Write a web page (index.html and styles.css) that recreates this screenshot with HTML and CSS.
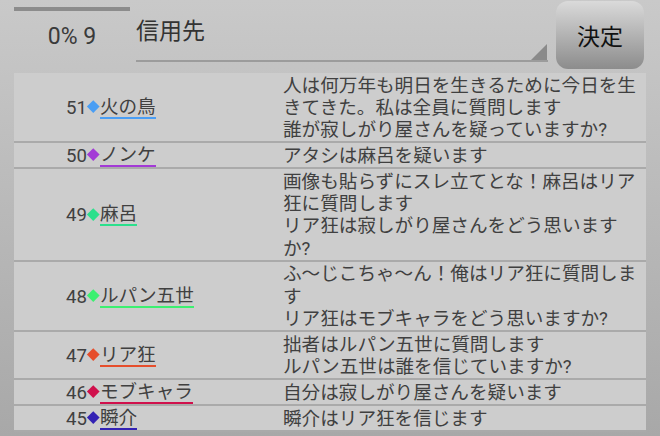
FILE: index.html
```html
<!DOCTYPE html>
<html lang="ja">
<head>
<meta charset="utf-8">
<link rel="stylesheet" href="styles.css">
</head>
<body>
<div class="header">
  <div class="progress">
    <div class="progress-bar"></div>
    <div class="progress-text">0% 9</div>
  </div>
  <div class="spinner">
    <span class="spinner-text">信用先</span>
    <span class="spinner-arrow"></span>
  </div>
  <div class="button">決定</div>
</div>
<div class="panel">
  <div class="row">
    <div class="who"><span class="num">51</span><span class="dia c-blue"></span><span class="name c-blue">火の鳥</span></div>
    <div class="msg">人は何万年も明日を生きるために今日を生きてきた。私は全員に質問します<br>誰が寂しがり屋さんを疑っていますか?</div>
  </div>
  <div class="row">
    <div class="who"><span class="num">50</span><span class="dia c-purple"></span><span class="name c-purple">ノンケ</span></div>
    <div class="msg">アタシは麻呂を疑います</div>
  </div>
  <div class="row">
    <div class="who"><span class="num">49</span><span class="dia c-green"></span><span class="name c-green">麻呂</span></div>
    <div class="msg">画像も貼らずにスレ立てとな！麻呂はリア狂に質問します<br>リア狂は寂しがり屋さんをどう思いますか?</div>
  </div>
  <div class="row">
    <div class="who"><span class="num">48</span><span class="dia c-lime"></span><span class="name c-lime">ルパン五世</span></div>
    <div class="msg">ふ〜じこちゃ〜ん！俺はリア狂に質問します<br>リア狂はモブキャラをどう思いますか?</div>
  </div>
  <div class="row">
    <div class="who"><span class="num">47</span><span class="dia c-orange"></span><span class="name c-orange">リア狂</span></div>
    <div class="msg">拙者はルパン五世に質問します<br>ルパン五世は誰を信じていますか?</div>
  </div>
  <div class="row">
    <div class="who"><span class="num">46</span><span class="dia c-crimson"></span><span class="name c-crimson">モブキャラ</span></div>
    <div class="msg">自分は寂しがり屋さんを疑います</div>
  </div>
  <div class="row">
    <div class="who"><span class="num">45</span><span class="dia c-indigo"></span><span class="name c-indigo">瞬介</span></div>
    <div class="msg">瞬介はリア狂を信じます</div>
  </div>
</div>
</body>
</html>
```

FILE: styles.css
```css
html, body {
  margin: 0;
  padding: 0;
  height: 100%;
}
body {
  width: 660px;
  height: 436px;
  overflow: hidden;
  background: linear-gradient(#c9c9c9, #a8a8a8);
  font-family: Roboto, "Noto Sans CJK JP", sans-serif;
  color: #404040;
}
.header {
  display: flex;
  height: 72px;
  padding-left: 14px;
}
.progress {
  width: 116px;
  display: flex;
  flex-direction: column;
}
.progress-bar {
  margin-top: 7px;
  height: 4px;
  background: #8c8c8c;
}
.progress-text {
  font-size: 23px;
  line-height: 27px;
  text-align: center;
  margin-top: 12px;
  color: #3a3a3a;
}
.spinner {
  position: relative;
  margin-left: 6px;
  width: 412px;
  height: 60px;
  border-bottom: 2px solid #9c9c9c;
}
.spinner-text {
  display: block;
  font-size: 23px;
  line-height: 30px;
  margin-top: 17px;
  color: #333;
}
.spinner-arrow {
  position: absolute;
  right: 1px;
  bottom: 0;
  width: 16px;
  height: 16px;
  background: #8a8a8a;
  clip-path: polygon(100% 0, 100% 100%, 0 100%);
}
.button {
  margin-left: 8px;
  margin-top: 1px;
  width: 88px;
  height: 68px;
  border-radius: 12px;
  background: linear-gradient(#dadada, #8c8c8c);
  display: flex;
  align-items: center;
  justify-content: center;
  font-size: 23px;
  color: #111;
}
.panel {
  margin: 1px 14px 0;
  background: #cdcdcd;
}
.row {
  display: grid;
  grid-template-columns: 269px 363px;
  padding-top: 1.5px;
  border-bottom: 2px solid #aaaaaa;
}
.who {
  display: flex;
  align-items: center;
  padding-left: 52px;
  font-size: 18.6px;
  line-height: 22.3px;
}
.num {
  color: #404040;
}
.dia {
  display: inline-block;
  width: 8.5px;
  height: 8.5px;
  margin: 0 2px 3px 2.5px;
  transform: rotate(45deg);
}
.name {
  display: inline-block;
  line-height: 20px;
  border-bottom: 2px solid;
  color: #404040;
}
.msg {
  font-size: 18.6px;
  line-height: 22.3px;
  padding-right: 6px;
}
.c-blue.dia { background: #4a9ef4; }
.c-blue.name { border-color: #4a9ef4; }
.c-purple.dia { background: #a33ad6; }
.c-purple.name { border-color: #a33ad6; }
.c-green.dia { background: #2be08c; }
.c-green.name { border-color: #2be08c; }
.c-lime.dia { background: #3cf070; }
.c-lime.name { border-color: #3cf070; }
.c-orange.dia { background: #e64e2c; }
.c-orange.name { border-color: #e64e2c; }
.c-crimson.dia { background: #d0104c; }
.c-crimson.name { border-color: #d0104c; }
.c-indigo.dia { background: #3322b4; }
.c-indigo.name { border-color: #3322b4; }
```
